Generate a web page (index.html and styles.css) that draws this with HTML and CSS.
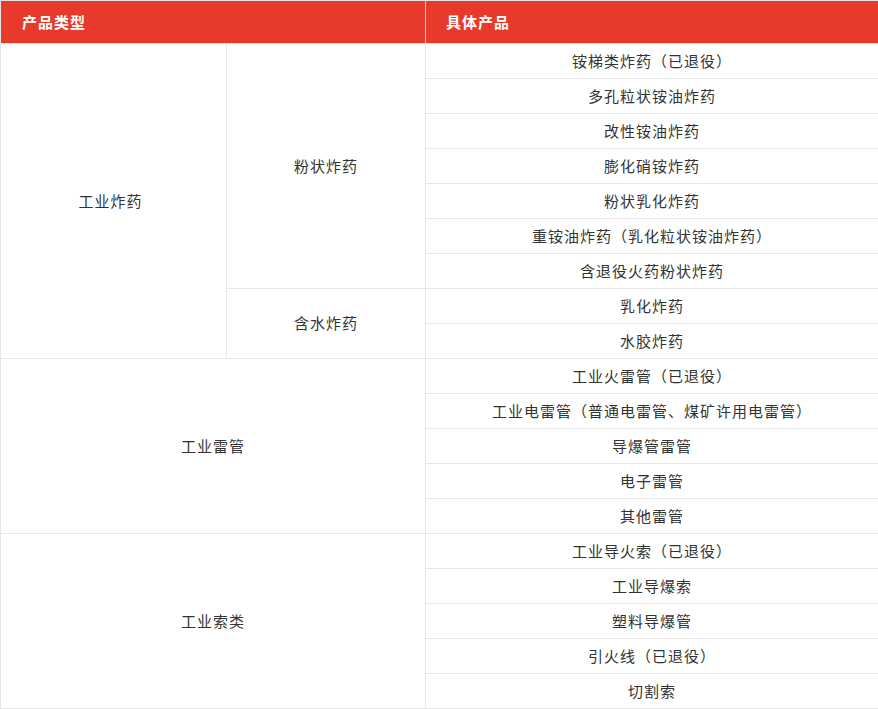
FILE: index.html
```html
<!DOCTYPE html>
<html lang="zh">
<head>
<meta charset="utf-8">
<link rel="stylesheet" href="styles.css">
</head>
<body>
<table class="tbl">
  <colgroup>
    <col class="w1">
    <col class="w2">
    <col class="w3">
  </colgroup>
  <thead>
    <tr>
      <th class="h1" colspan="2">产品类型</th>
      <th class="h2">具体产品</th>
    </tr>
  </thead>
  <tbody>
    <tr><td class="c1" rowspan="9">工业炸药</td><td rowspan="7">粉状炸药</td><td>铵梯类炸药（已退役）</td></tr>
    <tr><td>多孔粒状铵油炸药</td></tr>
    <tr><td>改性铵油炸药</td></tr>
    <tr><td>膨化硝铵炸药</td></tr>
    <tr><td>粉状乳化炸药</td></tr>
    <tr><td>重铵油炸药（乳化粒状铵油炸药）</td></tr>
    <tr><td>含退役火药粉状炸药</td></tr>
    <tr><td rowspan="2">含水炸药</td><td>乳化炸药</td></tr>
    <tr><td>水胶炸药</td></tr>
    <tr><td colspan="2" rowspan="5">工业雷管</td><td>工业火雷管（已退役）</td></tr>
    <tr><td>工业电雷管（普通电雷管、煤矿许用电雷管）</td></tr>
    <tr><td>导爆管雷管</td></tr>
    <tr><td>电子雷管</td></tr>
    <tr><td>其他雷管</td></tr>
    <tr><td colspan="2" rowspan="5">工业索类</td><td>工业导火索（已退役）</td></tr>
    <tr><td>工业导爆索</td></tr>
    <tr><td>塑料导爆管</td></tr>
    <tr><td>引火线（已退役）</td></tr>
    <tr><td>切割索</td></tr>
  </tbody>
</table>
</body>
</html>
```
FILE: styles.css
```css
html, body {
  margin: 0;
  padding: 0;
  background: #ffffff;
}
.tbl {
  width: 878px;
  border-collapse: collapse;
  table-layout: fixed;
  font-family: "Noto Sans CJK SC", "Noto Sans", sans-serif;
  font-size: 15px;
  letter-spacing: 1px;
  color: #333333;
  border: 1px solid #e6e6e6;
}
.w1 { width: 226px; }
.w2 { width: 199px; }
.w3 { width: 453px; }
.tbl th {
  background: #e83a2b;
  color: #ffffff;
  font-weight: bold;
  text-align: left;
  height: 40px;
  padding: 0 0 2px 21px;
  border: 1px solid #e6e6e6;
}
.tbl th.h1 {
  border-right-color: #f3c9c4;
}
.tbl th.h2 {
  padding-left: 20px;
}
.tbl td {
  border: 1px solid #e6e6e6;
  text-align: center;
  height: 32px;
  padding: 0 0 2px 0;
}
.tbl td.c1 {
  padding-right: 6px;
}
```
